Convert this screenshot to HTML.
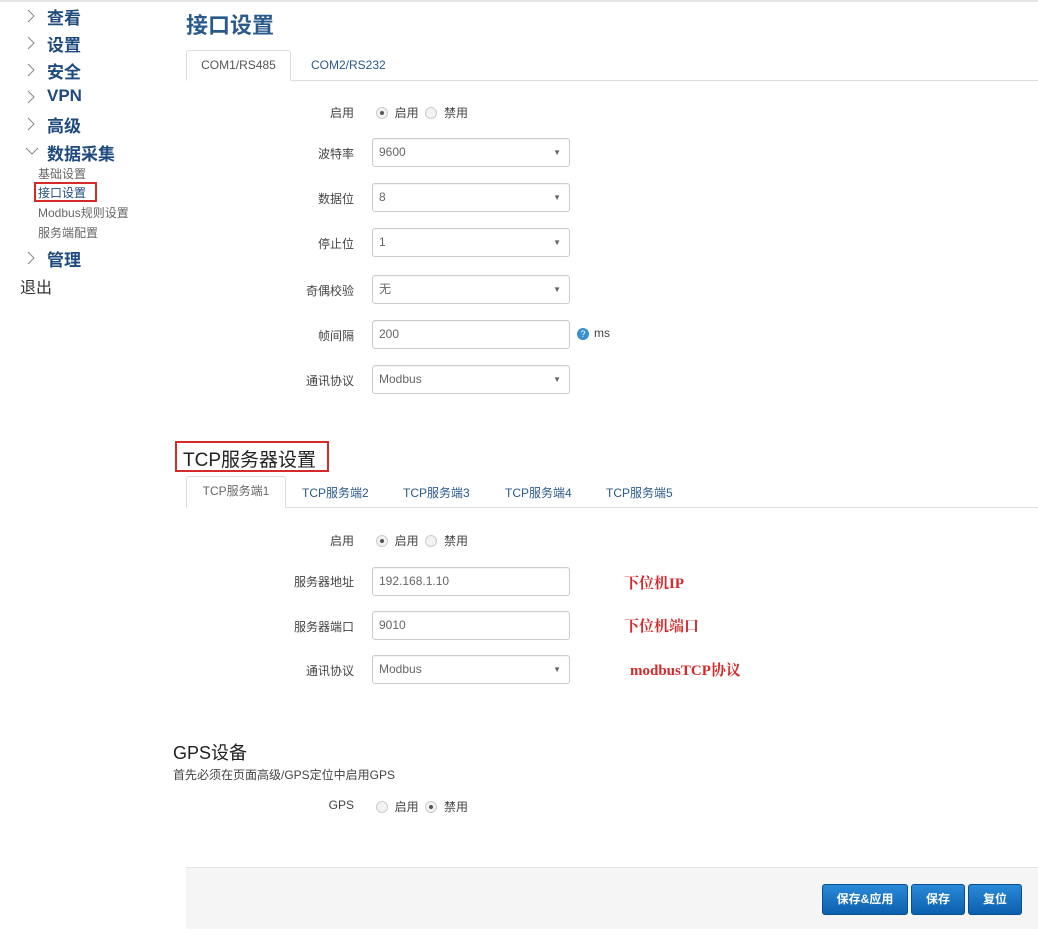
<!DOCTYPE html>
<html><head><meta charset="utf-8"><style>
*{margin:0;padding:0;box-sizing:border-box}
body{width:1038px;height:935px;background:#fff;position:relative;overflow:hidden;font-family:"Liberation Sans","Noto Sans CJK SC",sans-serif;color:#555;font-size:12px}
.a{position:absolute;white-space:nowrap}
.nav{font-size:17px;font-weight:bold;color:#1e4a7e;left:47px}
.chev{left:26px;width:10px;height:16px}
.sub{left:38px;font-size:12px;color:#666}
.lbl{width:160px;left:194px;text-align:right;font-size:12px;color:#444}
.ctl{left:372px;width:198px;height:29px;border:1px solid #ccc;border-radius:3px;font-size:12px;color:#666;padding-left:6px;line-height:27px;box-shadow:inset 0 1px 1px rgba(0,0,0,.05)}
.ctl .arr{position:absolute;right:8px;top:0;font-size:8px;color:#666}
.radio{display:inline-block;width:12px;height:12px;border:1px solid #ccc;border-radius:50%;background:#f3f3f3;vertical-align:-2px;position:relative}
.radio.on::after{content:"";position:absolute;left:3px;top:3px;width:4px;height:4px;border-radius:50%;background:#555}
.ann{left:624px;color:#d42a2a;font-weight:bold;font-family:"Liberation Serif","Noto Serif CJK SC",serif;font-size:15px}
.btn{top:884px;height:31px;border-radius:3px;background:linear-gradient(#2a8ad8,#0b5fae);border:1px solid #0a4f94;color:#fff;font-size:12px;font-weight:bold;text-align:center;line-height:29px}
</style></head><body>
<div class="a" style="left:0;top:0;width:1038px;height:2px;background:#e4e4e4"></div>

<svg class="a chev" style="top:8px" viewBox="0 0 10 16"><path d="M2 2 L8 8 L2 14" fill="none" stroke="#888" stroke-width="1"/></svg><div class="a nav" style="top:4px">查看</div>
<svg class="a chev" style="top:35px" viewBox="0 0 10 16"><path d="M2 2 L8 8 L2 14" fill="none" stroke="#888" stroke-width="1"/></svg><div class="a nav" style="top:31px">设置</div>
<svg class="a chev" style="top:62px" viewBox="0 0 10 16"><path d="M2 2 L8 8 L2 14" fill="none" stroke="#888" stroke-width="1"/></svg><div class="a nav" style="top:58px">安全</div>
<svg class="a chev" style="top:89px" viewBox="0 0 10 16"><path d="M2 2 L8 8 L2 14" fill="none" stroke="#888" stroke-width="1"/></svg><div class="a nav" style="top:86px">VPN</div>
<svg class="a chev" style="top:116px" viewBox="0 0 10 16"><path d="M2 2 L8 8 L2 14" fill="none" stroke="#888" stroke-width="1"/></svg><div class="a nav" style="top:112px">高级</div>
<svg class="a" style="left:24px;top:146px;width:16px;height:10px" viewBox="0 0 16 10"><path d="M2 2 L8 8 L14 2" fill="none" stroke="#888" stroke-width="1"/></svg><div class="a nav" style="top:140px">数据采集</div>
<div class="a sub" style="top:165px">基础设置</div>
<div class="a" style="left:34px;top:182px;width:63px;height:20px;border:2px solid #d42a2a"></div>
<div class="a sub" style="top:184px;color:#1e4a7e">接口设置</div>
<div class="a sub" style="top:204px">Modbus规则设置</div>
<div class="a sub" style="top:224px">服务端配置</div>
<svg class="a chev" style="top:250px" viewBox="0 0 10 16"><path d="M2 2 L8 8 L2 14" fill="none" stroke="#888" stroke-width="1"/></svg><div class="a nav" style="top:246px">管理</div>
<div class="a" style="left:20px;top:274px;font-size:16px;color:#333">退出</div>

<div class="a" style="left:186px;top:8px;font-size:22px;font-weight:bold;color:#2a5a8c">接口设置</div>
<div class="a" style="left:186px;top:80px;width:852px;height:1px;background:#ddd"></div>
<div class="a" style="left:186px;top:50px;width:105px;height:31px;border:1px solid #ddd;border-bottom:1px solid #fff;border-radius:3px 3px 0 0;background:#fff;text-align:center;line-height:29px;color:#555">COM1/RS485</div>
<div class="a" style="left:311px;top:58px;color:#2a5a8c">COM2/RS232</div>

<div class="a lbl" style="top:104px">启用</div>
<div class="a" style="left:376px;top:104px;color:#444"><span class="radio on"></span>&nbsp; 启用 &nbsp;<span class="radio"></span>&nbsp; 禁用</div>
<div class="a lbl" style="top:145px">波特率</div><div class="a ctl" style="top:138px">9600<span class="arr">▼</span></div>
<div class="a lbl" style="top:190px">数据位</div><div class="a ctl" style="top:183px">8<span class="arr">▼</span></div>
<div class="a lbl" style="top:235px">停止位</div><div class="a ctl" style="top:228px">1<span class="arr">▼</span></div>
<div class="a lbl" style="top:282px">奇偶校验</div><div class="a ctl" style="top:275px">无<span class="arr">▼</span></div>
<div class="a lbl" style="top:327px">帧间隔</div><div class="a ctl" style="top:320px">200</div>
<div class="a" style="left:577px;top:328px;width:12px;height:12px;border-radius:50%;background:#3b8fd0;color:#fff;font-size:9px;text-align:center;line-height:12px">?</div>
<div class="a" style="left:594px;top:326px;color:#444">ms</div>
<div class="a lbl" style="top:372px">通讯协议</div><div class="a ctl" style="top:365px">Modbus<span class="arr">▼</span></div>

<div class="a" style="left:175px;top:441px;width:154px;height:31px;border:2px solid #d42a2a"></div>
<div class="a" style="left:183px;top:445px;font-size:19px;color:#222">TCP服务器设置</div>
<div class="a" style="left:186px;top:507px;width:852px;height:1px;background:#ddd"></div>
<div class="a" style="left:186px;top:476px;width:100px;height:32px;border:1px solid #ddd;border-bottom:1px solid #fff;border-radius:3px 3px 0 0;background:#fff;text-align:center;line-height:29px;color:#666">TCP服务端1</div>
<div class="a" style="left:302px;top:484px;color:#2a5a8c">TCP服务端2</div>
<div class="a" style="left:403px;top:484px;color:#2a5a8c">TCP服务端3</div>
<div class="a" style="left:505px;top:484px;color:#2a5a8c">TCP服务端4</div>
<div class="a" style="left:606px;top:484px;color:#2a5a8c">TCP服务端5</div>

<div class="a lbl" style="top:532px">启用</div>
<div class="a" style="left:376px;top:532px;color:#444"><span class="radio on"></span>&nbsp; 启用 &nbsp;<span class="radio"></span>&nbsp; 禁用</div>
<div class="a lbl" style="top:573px">服务器地址</div><div class="a ctl" style="top:567px">192.168.1.10</div>
<div class="a lbl" style="top:618px">服务器端口</div><div class="a ctl" style="top:611px">9010</div>
<div class="a lbl" style="top:662px">通讯协议</div><div class="a ctl" style="top:655px">Modbus<span class="arr">▼</span></div>
<div class="a ann" style="top:572px">下位机IP</div>
<div class="a ann" style="top:615px">下位机端口</div>
<div class="a ann" style="left:630px;top:659px">modbusTCP协议</div>

<div class="a" style="left:173px;top:739px;font-size:18px;color:#222">GPS设备</div>
<div class="a" style="left:173px;top:766px;font-size:12px;color:#444">首先必须在页面高级/GPS定位中启用GPS</div>
<div class="a lbl" style="top:798px">GPS</div>
<div class="a" style="left:376px;top:798px;color:#444"><span class="radio"></span>&nbsp; 启用 &nbsp;<span class="radio on"></span>&nbsp; 禁用</div>

<div class="a" style="left:186px;top:867px;width:852px;height:62px;background:#f5f5f5;border-top:1px solid #e6e6e6"></div>
<div class="a btn" style="left:822px;width:86px">保存&amp;应用</div>
<div class="a btn" style="left:911px;width:54px">保存</div>
<div class="a btn" style="left:968px;width:54px">复位</div>
</body></html>
